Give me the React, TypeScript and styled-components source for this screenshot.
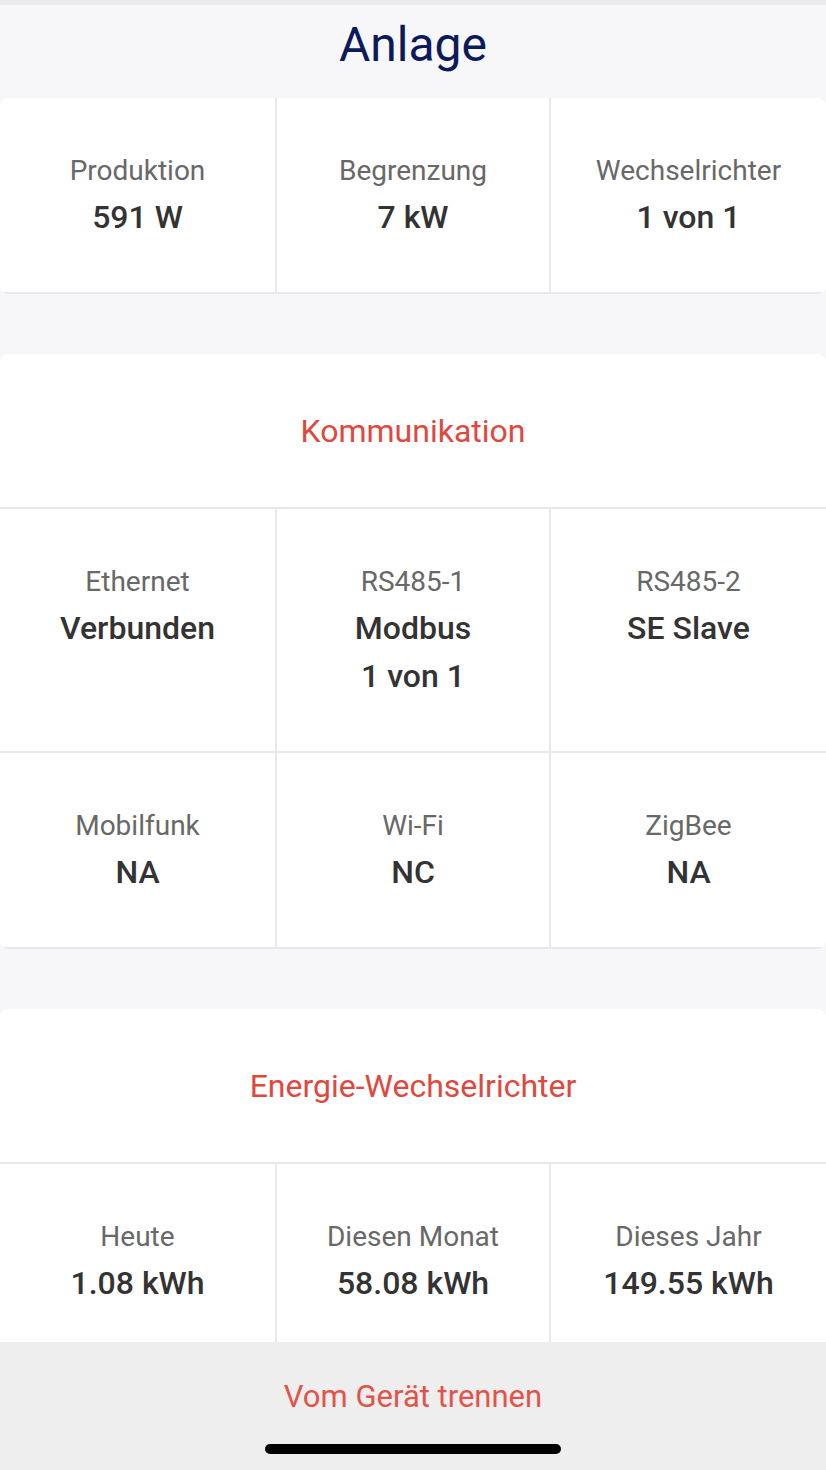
import React from 'react';
import styled, { createGlobalStyle } from 'styled-components';

const GlobalStyle = createGlobalStyle`
  html, body {
    margin: 0;
    padding: 0;
    background: #f7f7fa;
    font-family: Roboto, "Liberation Sans", Arial, sans-serif;
    -webkit-font-smoothing: antialiased;
  }
`;

interface Item {
  label: string;
  values: string[];
}

const anlage: Item[] = [
  { label: 'Produktion', values: ['591 W'] },
  { label: 'Begrenzung', values: ['7 kW'] },
  { label: 'Wechselrichter', values: ['1 von 1'] },
];

const kommunikation: Item[][] = [
  [
    { label: 'Ethernet', values: ['Verbunden'] },
    { label: 'RS485-1', values: ['Modbus', '1 von 1'] },
    { label: 'RS485-2', values: ['SE Slave'] },
  ],
  [
    { label: 'Mobilfunk', values: ['NA'] },
    { label: 'Wi-Fi', values: ['NC'] },
    { label: 'ZigBee', values: ['NA'] },
  ],
];

const energie: Item[] = [
  { label: 'Heute', values: ['1.08 kWh'] },
  { label: 'Diesen Monat', values: ['58.08 kWh'] },
  { label: 'Dieses Jahr', values: ['149.55 kWh'] },
];

const Row = ({ items }: { items: Item[] }) => (
  <GridRow>
    {items.map((it) => (
      <Cell key={it.label}>
        <Label>{it.label}</Label>
        {it.values.map((v) => (
          <Value key={v}>{v}</Value>
        ))}
      </Cell>
    ))}
  </GridRow>
);

const App = () => {
  return (
    <>
      <GlobalStyle />
      <Page>
        <Scroll>
          <TopStrip />
          <Title>Anlage</Title>
          <Card>
            <Row items={anlage} />
          </Card>

          <Card $gap>
            <CardHeader>Kommunikation</CardHeader>
            {kommunikation.map((r, i) => (
              <Row key={i} items={r} />
            ))}
          </Card>

          <Card $gap>
            <CardHeader>Energie-Wechselrichter</CardHeader>
            <Row items={energie} />
          </Card>
        </Scroll>
        <Footer>
          <DisconnectButton>Vom Gerät trennen</DisconnectButton>
          <HomeIndicator />
        </Footer>
      </Page>
    </>
  );
};

export default App;

const Page = styled.div`
  display: flex;
  flex-direction: column;
  width: 826px;
  height: 1470px;
  overflow: hidden;
  background: #f7f7fa;
`;

const Scroll = styled.div`
  flex: 1;
  overflow: hidden;
  display: flex;
  flex-direction: column;
`;

const TopStrip = styled.div`
  flex: 0 0 5px;
  background: #ebebef;
`;

const Title = styled.h1`
  margin: 0;
  height: 93px;
  flex: 0 0 93px;
  display: flex;
  align-items: center;
  justify-content: center;
  padding-bottom: 15px;
  box-sizing: border-box;
  font-size: 48px;
  font-weight: 400;
  color: #0c1a5a;
`;

const Card = styled.section<{ $gap?: boolean }>`
  flex: 0 0 auto;
  background: #ffffff;
  border-radius: 8px;
  margin-top: ${(p) => (p.$gap ? '60px' : '0')};
  overflow: hidden;
`;

const CardHeader = styled.h2`
  margin: 0;
  height: 153px;
  display: flex;
  align-items: center;
  justify-content: center;
  font-size: 32px;
  font-weight: 400;
  color: #e0483e;
  border-bottom: 2px solid #e9e9ed;
`;

const GridRow = styled.div`
  display: grid;
  grid-template-columns: 275px 274px 277px;
  border-bottom: 2px solid #e9e9ed;
`;

const Cell = styled.div`
  display: flex;
  flex-direction: column;
  align-items: center;
  padding: 51px 8px;
  text-align: center;
  & + & {
    border-left: 2px solid #e9e9ed;
  }
`;

const Label = styled.div`
  font-size: 28px;
  line-height: 44px;
  color: #686868;
`;

const Value = styled.div`
  font-size: 32px;
  line-height: 48px;
  font-weight: 500;
  color: #333333;
`;

const Footer = styled.footer`
  flex: 0 0 128px;
  background: #eeeeee;
  display: flex;
  flex-direction: column;
  align-items: center;
  padding-top: 33px;
  box-sizing: border-box;
`;

const DisconnectButton = styled.button`
  border: none;
  background: transparent;
  padding: 0;
  font-family: inherit;
  font-size: 31px;
  line-height: 44px;
  color: #e2544a;
  cursor: pointer;
`;

const HomeIndicator = styled.div`
  margin-top: 25px;
  width: 296px;
  height: 10px;
  border-radius: 5px;
  background: #000000;
`;
